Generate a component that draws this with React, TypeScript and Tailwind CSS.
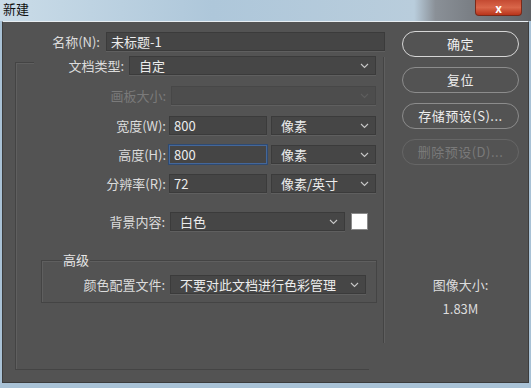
import React from 'react';

const font = { fontFamily: '"Noto Sans CJK SC", "Noto Sans", sans-serif' };

// small "v" used by every dropdown
const Chevron: React.FC<{ dim?: boolean }> = ({ dim }) => (
  <svg width="9" height="6" viewBox="0 0 9 6" className="shrink-0">
    <polyline points="1,1 4.5,4.5 8,1" fill="none" stroke={dim ? '#5e5e5e' : '#c8c8c8'} strokeWidth="1.1" />
  </svg>
);

interface FieldProps {
  value?: string;
  width: string;
  focus?: boolean;
}

const TextField: React.FC<FieldProps> = ({ value, width, focus }) => (
  <div
    className={`${width} h-[19px] shrink-0 flex items-center pl-[4px] text-[13px] text-[#ececec] bg-[#454545] border ${
      focus ? 'border-[#44679a] shadow-[0_0_0_1px_#2f4a70]' : 'border-[#3b3b3b] shadow-[0_1px_0_#5f5f5f]'
    }`}
  >
    {value}
  </div>
);

const Select: React.FC<FieldProps & { disabled?: boolean }> = ({ value, width, disabled }) => (
  <div
    className={`${width} h-[19px] shrink-0 flex items-center justify-between pl-[9px] pr-[6px] text-[13px] border shadow-[0_1px_0_#5f5f5f] ${
      disabled ? 'bg-[#4d4d4d] border-[#474747] text-[#777]' : 'bg-[#464646] border-[#3b3b3b] text-[#ececec]'
    }`}
  >
    <span>{value}</span>
    <Chevron dim={disabled} />
  </div>
);

const Label: React.FC<{ text: string; width: string; disabled?: boolean }> = ({ text, width, disabled }) => (
  <span className={`${width} shrink-0 text-right text-[13px] leading-[16px] ${disabled ? 'text-[#7a7a7a]' : 'text-[#dcdcdc]'}`}>
    {text}
  </span>
);

const Button: React.FC<{ text: string; primary?: boolean; disabled?: boolean }> = ({ text, primary, disabled }) => (
  <div
    className={`w-[117px] h-[26px] rounded-full flex items-center justify-center text-[13px] tracking-[0.5px] ${
      primary
        ? 'border-[1.5px] border-[#d6d6d6] text-[#f0f0f0]'
        : disabled
        ? 'border border-[#666] text-[#7a7a7a]'
        : 'border border-[#8c8c8c] text-[#ececec]'
    }`}
  >
    {text}
  </div>
);

export default function App() {
  return (
    <div className="w-[531px] h-[388px] flex flex-col bg-[#a9c2d6] overflow-hidden" style={font}>
      {/* Aero title bar */}
      <div className="h-[21px] shrink-0 flex items-start justify-between bg-[linear-gradient(to_right,#cadce8_0%,#aec7da_40%,#b9cddc_78%,#8a9097_82%,#5f6266_100%)]">
        <span className="pl-[3px] pt-[1px] text-[13px] leading-[16px] text-[#111]">新建</span>
        <div className="mr-[9px] w-[47px] h-[16px] rounded-b-[4px] border border-t-0 border-[#7a2a1a] bg-[linear-gradient(to_bottom,#c44a32,#d9664a_50%,#b8341a)] flex items-center justify-center">
          <span className="text-white text-[12px] font-bold leading-[12px]">x</span>
        </div>
      </div>

      {/* dialog body */}
      <div className="mx-[2px] h-[362px] shrink-0 flex bg-[#535353] border border-[#3c3c3c] border-t-[#e8eef2]">
        {/* left column */}
        <div className="w-[380px] shrink-0 flex flex-col">
          {/* name */}
          <div className="mt-[10px] flex items-center">
            <Label text="名称(N):" width="w-[97px]" />
            <div className="ml-[6px]">
              <TextField value="未标题-1" width="w-[279px]" />
            </div>
          </div>

          {/* preset frame */}
          <div className="mt-[11px] ml-[12px] w-[354px] h-[308px] border-l border-t border-b border-[#444] shadow-[inset_1px_1px_0_#5f5f5f] flex flex-col">
            <div className="-mt-[7px] ml-[18px] flex items-center bg-[#535353]">
              <Label text="文档类型:" width="w-[90px]" />
              <div className="ml-[5px]">
                <Select value="自定" width="w-[247px]" />
              </div>
            </div>

            <div className="mt-[11px] flex items-center">
              <Label text="画板大小:" width="w-[150px]" disabled />
              <div className="ml-[5px]">
                <Select width="w-[205px]" disabled />
              </div>
            </div>

            <div className="mt-[11px] flex items-center">
              <Label text="宽度(W):" width="w-[150px]" />
              <div className="ml-[3px]">
                <TextField value="800" width="w-[98px]" />
              </div>
              <div className="ml-[4px]">
                <Select value="像素" width="w-[105px]" />
              </div>
            </div>

            <div className="mt-[10px] flex items-center">
              <Label text="高度(H):" width="w-[150px]" />
              <div className="ml-[3px]">
                <TextField value="800" width="w-[98px]" focus />
              </div>
              <div className="ml-[4px]">
                <Select value="像素" width="w-[105px]" />
              </div>
            </div>

            <div className="mt-[10px] flex items-center">
              <Label text="分辨率(R):" width="w-[150px]" />
              <div className="ml-[3px]">
                <TextField value="72" width="w-[98px]" />
              </div>
              <div className="ml-[4px]">
                <Select value="像素/英寸" width="w-[105px]" />
              </div>
            </div>

            <div className="mt-[19px] flex items-center">
              <Label text="背景内容:" width="w-[149px]" />
              <div className="ml-[5px]">
                <Select value="白色" width="w-[175px]" />
              </div>
              <div className="ml-[6px] w-[17px] h-[17px] bg-white border border-[#8a8a8a]" />
            </div>

            {/* advanced */}
            <div className="mt-[29px] ml-[25px] w-[336px] h-[43px] border border-[#444] shadow-[inset_1px_1px_0_#5f5f5f] flex flex-col">
              <span className="-mt-[9px] ml-[20px] self-start px-[1px] bg-[#535353] text-[13px] leading-[16px] text-[#e6e6e6]">
                高级
              </span>
              <div className="mt-[7px] flex items-center">
                <Label text="颜色配置文件:" width="w-[123px]" />
                <div className="ml-[5px]">
                  <Select value="不要对此文档进行色彩管理" width="w-[196px]" />
                </div>
              </div>
            </div>
          </div>
        </div>

        {/* divider */}
        <div className="mt-[35px] w-px h-[286px] bg-[#444] shadow-[1px_0_0_#5f5f5f]" />

        {/* right column */}
        <div className="flex-1 flex flex-col items-start pl-[18px] pt-[9px]">
          <div className="flex flex-col gap-[10px]">
            <Button text="确定" primary />
            <Button text="复位" />
            <Button text="存储预设(S)..." />
            <Button text="删除预设(D)..." disabled />
          </div>
          <div className="mt-[112px] w-[117px] flex flex-col items-center text-[13px] text-[#dcdcdc]">
            <span className="leading-[16px]">图像大小:</span>
            <span className="mt-[8px] leading-[16px]">1.83M</span>
          </div>
        </div>
      </div>
    </div>
  );
}
